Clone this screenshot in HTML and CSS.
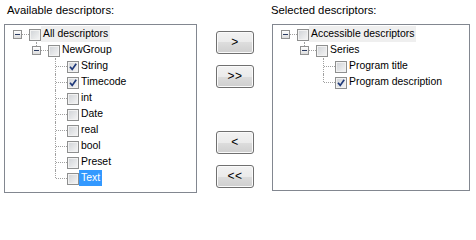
FILE: index.html
```html
<!DOCTYPE html>
<html>
<head>
<meta charset="utf-8">
<link rel="stylesheet" href="styles.css">
</head>
<body>
<div class="dialog">
  <div class="col col-left">
    <div class="caption">Available descriptors:</div>
    <div class="panel panel-left">
      <div class="tree">
        <div class="row l0"><span class="gutter root"><span class="exp"></span></span><span class="cb"></span><span class="lbl inactive">All descriptors</span></div>
        <div class="row l1"><span class="gutter last"><span class="exp"></span></span><span class="cb"></span><span class="lbl">NewGroup</span></div>
        <div class="row l2"><span class="gutter"></span><span class="cb checked"><svg viewBox="0 0 10 10" width="10" height="10"><path d="M2 4.8 L4.2 7.4 L8.2 1.8" fill="none" stroke="#1f3a7a" stroke-width="1.7"/></svg></span><span class="lbl">String</span></div>
        <div class="row l2"><span class="gutter"></span><span class="cb checked"><svg viewBox="0 0 10 10" width="10" height="10"><path d="M2 4.8 L4.2 7.4 L8.2 1.8" fill="none" stroke="#1f3a7a" stroke-width="1.7"/></svg></span><span class="lbl">Timecode</span></div>
        <div class="row l2"><span class="gutter"></span><span class="cb"></span><span class="lbl">int</span></div>
        <div class="row l2"><span class="gutter"></span><span class="cb"></span><span class="lbl">Date</span></div>
        <div class="row l2"><span class="gutter"></span><span class="cb"></span><span class="lbl">real</span></div>
        <div class="row l2"><span class="gutter"></span><span class="cb"></span><span class="lbl">bool</span></div>
        <div class="row l2"><span class="gutter"></span><span class="cb"></span><span class="lbl">Preset</span></div>
        <div class="row l2"><span class="gutter last"></span><span class="cb"></span><span class="lbl selected">Text</span></div>
      </div>
    </div>
  </div>
  <div class="mid">
    <button class="btn">&gt;</button>
    <button class="btn">&gt;&gt;</button>
    <button class="btn btn-gap">&lt;</button>
    <button class="btn">&lt;&lt;</button>
  </div>
  <div class="col col-right">
    <div class="caption caption-right">Selected descriptors:</div>
    <div class="panel panel-right">
      <div class="tree">
        <div class="row l0"><span class="gutter root"><span class="exp"></span></span><span class="cb"></span><span class="lbl inactive">Accessible descriptors</span></div>
        <div class="row l1"><span class="gutter last"><span class="exp"></span></span><span class="cb"></span><span class="lbl">Series</span></div>
        <div class="row l2"><span class="gutter"></span><span class="cb"></span><span class="lbl">Program title</span></div>
        <div class="row l2"><span class="gutter last"></span><span class="cb checked"><svg viewBox="0 0 10 10" width="10" height="10"><path d="M2 4.8 L4.2 7.4 L8.2 1.8" fill="none" stroke="#1f3a7a" stroke-width="1.7"/></svg></span><span class="lbl">Program description</span></div>
      </div>
    </div>
  </div>
</div>
</body>
</html>
```

FILE: styles.css
```css
html, body {
  margin: 0;
  padding: 0;
  background: #ffffff;
}

body {
  font-family: "Liberation Sans", Arial, sans-serif;
  color: #000;
}

.dialog {
  display: flex;
  align-items: flex-start;
  padding: 4px 0 0 4px;
}

.col {
  display: flex;
  flex-direction: column;
}

.col-left {
  width: 193px;
}

.col-right {
  width: 198px;
  margin-left: 18px;
}

.caption {
  font-size: 11.3px;
  line-height: 13px;
  height: 13px;
  margin-bottom: 7px;
  padding-left: 3px;
  white-space: nowrap;
}

.caption-right {
  padding-left: 0;
  margin-left: -1px;
}

.panel {
  box-sizing: border-box;
  border: 1px solid #828790;
  background: #fff;
  padding: 1px 0 0 3px;
}

.panel-left {
  height: 169px;
}

.panel-right {
  height: 167px;
}

.tree {
  display: flex;
  flex-direction: column;
}

.row {
  display: flex;
  align-items: center;
  height: 16px;
  font-size: 10.4px;
  line-height: 16px;
  white-space: nowrap;
}

.l1 { padding-left: 19px; }
.l2 { padding-left: 38px; }

.gutter {
  position: relative;
  width: 21px;
  height: 16px;
  flex: none;
  display: flex;
  align-items: center;
  padding-left: 5px;
  box-sizing: border-box;
}

.gutter::before {
  content: "";
  position: absolute;
  left: 9px;
  top: 0;
  bottom: 0;
  border-left: 1px dotted #a0a0a0;
}

.gutter.last::before {
  bottom: 8px;
}

.gutter.root::before {
  display: none;
}

.gutter::after {
  content: "";
  position: absolute;
  left: 10px;
  right: 0;
  top: 8px;
  border-top: 1px dotted #a0a0a0;
}

.exp {
  position: relative;
  z-index: 1;
  width: 9px;
  height: 9px;
  box-sizing: border-box;
  border: 1px solid #919191;
  background: linear-gradient(#ffffff, #dcdcdc);
  margin-top: 1px;
}

.exp::after {
  content: "";
  position: absolute;
  left: 1px;
  top: 3px;
  width: 5px;
  height: 1px;
  background: #2b3c62;
}

.cb {
  width: 12px;
  height: 12px;
  box-sizing: border-box;
  flex: none;
  border: 1px solid #8e8f8f;
  background: linear-gradient(135deg, #cfd2d6, #f6f6f6);
  box-shadow: inset 0 0 0 1px #f2f2f2;
  display: flex;
  align-items: center;
  justify-content: center;
  margin-top: 1px;
}

.cb svg {
  display: block;
}

.lbl {
  padding: 0 2px;
  height: 16px;
}

.lbl.inactive {
  background: #efefef;
}

.lbl.selected {
  background: #3399ff;
  color: #fff;
}

.mid {
  display: flex;
  flex-direction: column;
  width: 38px;
  margin-left: 19px;
  padding-top: 27px;
}

.btn {
  width: 38px;
  height: 23px;
  margin: 0 0 11px 0;
  padding: 0;
  box-sizing: border-box;
  border: 1px solid #707070;
  border-radius: 3px;
  background: linear-gradient(#f2f2f2 0%, #ebebeb 50%, #dddddd 50%, #cfcfcf 100%);
  box-shadow: inset 0 0 0 1px #fafafa;
  font-family: "Liberation Sans", Arial, sans-serif;
  font-size: 12px;
  line-height: 21px;
  color: #000;
  letter-spacing: 0.5px;
}

.btn-gap {
  margin-top: 32px;
}
```
